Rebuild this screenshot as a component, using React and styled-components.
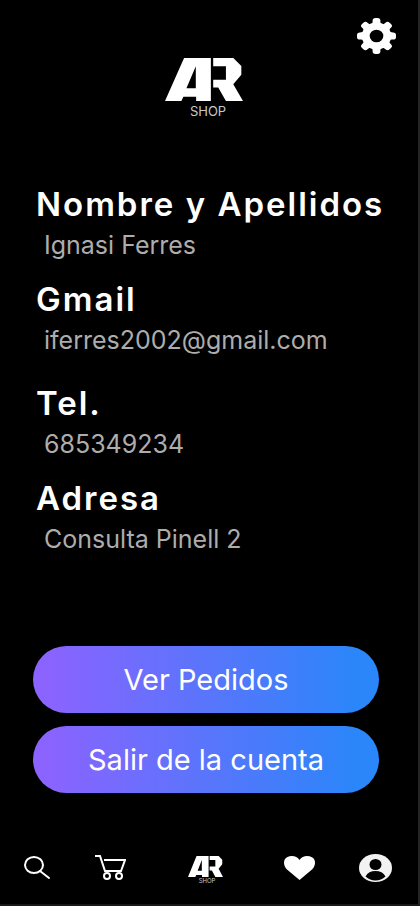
import React from "react";
import styled, { createGlobalStyle } from "styled-components";

const GlobalStyle = createGlobalStyle`
  *, *::before, *::after { box-sizing: border-box; }
  body {
    margin: 0;
    background: #000;
    color: #fff;
    font-family: Inter, "Liberation Sans", sans-serif;
  }
`;

const Screen = styled.div`
  display: flex;
  flex-direction: column;
  min-height: 100vh;
  background: #000;
  border-right: 2px solid #242424;
  border-bottom: 2px solid #181818;
`;

const Header = styled.header`
  display: grid;
  grid-template-columns: 1fr auto 1fr;
  align-items: start;
  padding: 18px 22px 0 12px;
`;

const IconButton = styled.button`
  display: flex;
  padding: 0;
  border: 0;
  background: none;
  color: #fff;
  cursor: pointer;
`;

const SettingsButton = styled(IconButton)`
  grid-column: 3;
  justify-self: end;
`;

const Brand = styled.div`
  grid-column: 2;
  display: flex;
  flex-direction: column;
  align-items: center;
  padding-top: 40px;
`;

const BrandName = styled.span`
  padding-left: ${(p) => (p.$small ? 4 : 8)}px;
  font-size: ${(p) => (p.$small ? 6 : 13)}px;
  line-height: ${(p) => (p.$small ? 8 : 20)}px;
  color: #c8c8c8;
`;

const Main = styled.main`
  display: flex;
  flex: 1;
  flex-direction: column;
`;

const Details = styled.dl`
  display: flex;
  flex-direction: column;
  gap: 12px;
  margin: 61px 0 0;
  padding-left: 36px;
`;

const Field = styled.div`
  padding-top: ${(p) => (p.$spaced ? 9 : 0)}px;
`;

const Label = styled.dt`
  font-size: 33px;
  font-weight: 600;
  line-height: 44px;
  letter-spacing: 2px;
  white-space: nowrap;
`;

const Value = styled.dd`
  margin: 0 0 0 8px;
  color: #adadad;
  font-size: 25px;
  font-weight: 400;
  line-height: 39px;
`;

const Actions = styled.div`
  display: flex;
  flex-direction: column;
  gap: 13px;
  padding: 87px 39px 0 33px;
`;

const ActionButton = styled.button`
  height: 67px;
  padding: 0;
  border: 0;
  border-radius: 34px;
  background: linear-gradient(90deg, #8b63ff 4%, #2a86f9 94%);
  color: #fff;
  font-family: inherit;
  font-size: 29px;
  font-weight: 400;
  cursor: pointer;
`;

const Nav = styled.nav`
  display: flex;
  align-items: center;
  justify-content: space-between;
  padding: 0 26px 19px 24px;
`;

const HomeButton = styled(IconButton)`
  flex-direction: column;
  align-items: center;
  margin: 6px 17px 0;
  font-family: inherit;
`;

function Mark({ width, height }) {
  return (
    <svg width={width} height={height} viewBox="46 42 233 125" preserveAspectRatio="none" aria-hidden="true">
      <path
        fill="#fff"
        fillRule="evenodd"
        d="M46 167 103 42H183V167H139V155H101L95 167ZM138 66 110 130H138Z"
      />
      <path fill="#fff" d="M190 42H250L274 65V91L250 118 279 167H228L205 128H190V105H228V66H190Z" />
    </svg>
  );
}

function GearIcon() {
  const teeth = [0, 45, 90, 135, 180, 225, 270, 315];
  return (
    <svg width="39" height="36" viewBox="-20 -20 40 40" preserveAspectRatio="none" aria-hidden="true">
      <g fill="#fff">
        {teeth.map((a) => (
          <path
            key={a}
            transform={`rotate(${a})`}
            d="M-6-12C-4-14-4-15-4-17Q-4-20-1-20H1Q4-20 4-17C4-15 4-14 6-12Z"
          />
        ))}
        <path fillRule="evenodd" d="M0-15A15 15 0 1 1 0 15A15 15 0 1 1 0-15ZM0-7A7 7 0 1 0 0 7A7 7 0 1 0 0-7Z" />
      </g>
    </svg>
  );
}

function SearchIcon() {
  return (
    <svg width="27" height="24" viewBox="0 0 27 24" fill="none" stroke="#fff" strokeWidth="2" aria-hidden="true">
      <ellipse cx="10" cy="9" rx="9" ry="8" />
      <path d="M16 15 25 22" strokeLinecap="round" />
    </svg>
  );
}

function CartIcon() {
  return (
    <svg width="31" height="25" viewBox="0 0 31 25" fill="none" stroke="#fff" strokeWidth="2" aria-hidden="true">
      <path d="M0 1H5L10 16H26L30 5H9" />
      <circle cx="12" cy="21" r="3" />
      <circle cx="24" cy="21" r="3" />
    </svg>
  );
}

function HeartIcon() {
  return (
    <svg width="31" height="24" viewBox="0 0 31 24" fill="#fff" aria-hidden="true">
      <path d="M15.5 24 3 13.5C-1 9.500-1 3.500 3 1.300 7-1 13-.3 15.500 4 18-.3 24-1 28 1.300 32 3.500 32 9.500 28 13.500Z" />
    </svg>
  );
}

function ProfileIcon() {
  return (
    <svg width="33" height="28" viewBox="0 0 33 28" aria-hidden="true">
      <ellipse cx="16.500" cy="14" rx="16.500" ry="14" fill="#f2f2f2" />
      <ellipse cx="16.500" cy="10.500" rx="6" ry="5.500" fill="#000" />
      <path d="M6.500 22.500C8.500 18.700 12 17 16.500 17S24.500 18.700 26.500 22.500C23.500 25.200 20.200 26.500 16.500 26.500S9.500 25.200 6.500 22.500Z" fill="#000" />
    </svg>
  );
}

const fields = [
  { label: "Nombre y Apellidos", value: "Ignasi Ferres" },
  { label: "Gmail", value: "iferres2002@gmail.com" },
  { label: "Tel.", value: "685349234", spaced: true },
  { label: "Adresa", value: "Consulta Pinell 2" },
];

export default function App() {
  return (
    <Screen>
      <GlobalStyle />
      <Header>
        <Brand>
          <Mark width="78" height="43" />
          <BrandName>SHOP</BrandName>
        </Brand>
        <SettingsButton type="button" aria-label="Ajustes">
          <GearIcon />
        </SettingsButton>
      </Header>
      <Main>
        <Details>
          {fields.map((f) => (
            <Field key={f.label} $spaced={f.spaced}>
              <Label>{f.label}</Label>
              <Value>{f.value}</Value>
            </Field>
          ))}
        </Details>
        <Actions>
          <ActionButton type="button">Ver Pedidos</ActionButton>
          <ActionButton type="button">Salir de la cuenta</ActionButton>
        </Actions>
      </Main>
      <Nav aria-label="Principal">
        <IconButton type="button" aria-label="Buscar">
          <SearchIcon />
        </IconButton>
        <IconButton type="button" aria-label="Carrito">
          <CartIcon />
        </IconButton>
        <HomeButton type="button">
          <Mark width="35" height="21" />
          <BrandName $small>SHOP</BrandName>
        </HomeButton>
        <IconButton type="button" aria-label="Favoritos">
          <HeartIcon />
        </IconButton>
        <IconButton type="button" aria-label="Perfil">
          <ProfileIcon />
        </IconButton>
      </Nav>
    </Screen>
  );
}
